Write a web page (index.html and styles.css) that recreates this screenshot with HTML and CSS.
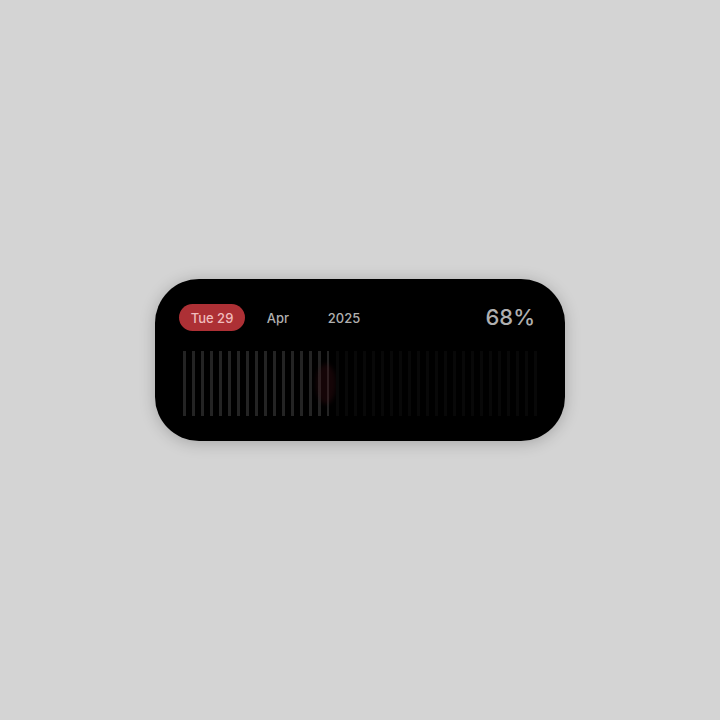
FILE: index.html
```html
<!DOCTYPE html>
<html lang="en">
<head>
<meta charset="utf-8">
<meta name="viewport" content="width=device-width, initial-scale=1">
<title>Date progress</title>
<link rel="stylesheet" href="styles.css">
</head>
<body>
<main class="card">
  <header class="head">
    <div class="tabs">
      <button class="tab tab-active" type="button" aria-pressed="true">Tue 29</button>
      <button class="tab" type="button" aria-pressed="false">Apr</button>
      <button class="tab" type="button" aria-pressed="false">2025</button>
    </div>
    <output class="percent">68%</output>
  </header>
  <div class="bars">
    <i class="bar on"></i><i class="bar on"></i><i class="bar on"></i><i class="bar on"></i><i class="bar on"></i>
    <i class="bar on"></i><i class="bar on"></i><i class="bar on"></i><i class="bar on"></i><i class="bar on"></i>
    <i class="bar on"></i><i class="bar on"></i><i class="bar on"></i><i class="bar on"></i><i class="bar on"></i>
    <i class="bar on"></i><i class="bar on current"></i><i class="bar"></i><i class="bar"></i><i class="bar"></i>
    <i class="bar"></i><i class="bar"></i><i class="bar"></i><i class="bar"></i><i class="bar"></i>
    <i class="bar"></i><i class="bar"></i><i class="bar"></i><i class="bar"></i><i class="bar"></i>
    <i class="bar"></i><i class="bar"></i><i class="bar"></i><i class="bar"></i><i class="bar"></i>
    <i class="bar"></i><i class="bar"></i><i class="bar"></i><i class="bar"></i><i class="bar"></i>
  </div>
</main>
</body>
</html>
```
FILE: styles.css
```css
* {
  box-sizing: border-box;
}

body {
  margin: 0;
  min-height: 100vh;
  display: grid;
  place-items: center;
  background: #d4d4d4;
  font-family: Inter, "Liberation Sans", sans-serif;
}

.card {
  width: 100%;
  max-width: 410px;
  padding: 25px 24px;
  border-radius: 44px;
  background: #000;
  box-shadow: 0 2px 16px rgba(0, 0, 0, 0.22);
}

.head {
  display: flex;
  align-items: center;
  justify-content: space-between;
  padding-right: 6px;
}

.tabs {
  display: grid;
  grid-template-columns: repeat(3, 66px);
}

.tab {
  height: 27px;
  padding: 1px 0 0;
  border: 0;
  border-radius: 14px;
  background: none;
  color: #b0b0b0;
  font: 500 13px/26px Inter, "Liberation Sans", sans-serif;
  text-align: center;
}

.tab-active {
  background: #ad3035;
  color: #f0bcbd;
}

.percent {
  color: #b0b0b0;
  font-size: 22px;
  font-weight: 500;
  line-height: 27px;
}

.bars {
  display: flex;
  justify-content: space-between;
  height: 65px;
  margin: 20px 4px 0;
}

.bar {
  position: relative;
  width: 3px;
  background: #080808;
}

.on {
  background: #242424;
}

.current {
  width: 2px;
  margin-right: 1px;
}

.current::after {
  content: "";
  position: absolute;
  top: 13px;
  left: -11px;
  width: 20px;
  height: 40px;
  border-radius: 50%;
  background: rgba(80, 20, 26, 0.26);
  filter: blur(2px);
}
```
